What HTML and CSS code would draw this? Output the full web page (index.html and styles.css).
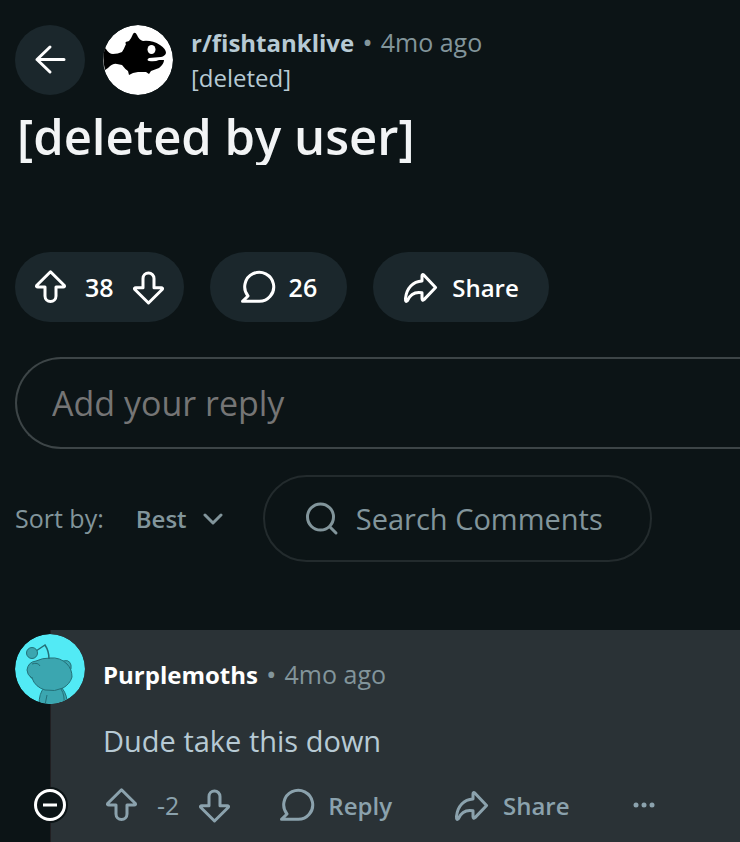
FILE: index.html
```html
<!DOCTYPE html>
<html lang="en">
<head>
<meta charset="utf-8">
<meta name="viewport" content="width=device-width, initial-scale=1">
<title>r/fishtanklive - [deleted by user]</title>
<link rel="stylesheet" href="styles.css">
</head>
<body>
<svg class="sprite" aria-hidden="true">
  <symbol id="up" viewBox="0 0 36 36"><path d="M18.500 2.800 4.600 16.500Q4 18 5.800 18H13V27a5.500 5.500 0 0 0 11 0V18h7.200q1.800 0 1.200-1.500Z"/></symbol>
  <symbol id="down" viewBox="0 0 36 36"><path d="M17.500 34 31.400 20.300Q32 18.800 30.200 18.800H23V9.500a5.500 5.500 0 0 0-11 0v9.300H4.800q-1.800 0-1.200 1.500Z"/></symbol>
  <symbol id="bubble" viewBox="0 0 36 36"><path d="M2.500 32.300 8 27A14.500 14.500 0 1 1 18.500 32.300Z"/></symbol>
  <symbol id="share" viewBox="0 0 36 36"><path d="M19 12V7q0-2.500 2-.8L32.600 18.500 21 30.600q-2 1.500-2-1V23.800C12 22.500 7 26 4.600 31.400Q2.200 34 2.500 29.500C3.500 19 10 12.500 19 12Z"/></symbol>
</svg>

<main class="page">
  <header class="post-head">
    <button class="back" type="button" aria-label="Back">
      <svg class="icon" viewBox="0 0 36 36"><path d="M32 17.500H5M18 5 5 17.500l13 12.500"/></svg>
    </button>
    <svg class="avatar" viewBox="0 0 70 70" aria-hidden="true">
      <circle cx="35" cy="35" r="35" fill="#fff"/>
      <path d="M1 22 3 24Q6 29 10 29Q15 29 19 27Q21 24 23 19Q21 17 26 16Q28 14 30 9Q32 6 34 10Q36 15 40 16Q49 15 57 20Q63 24 63 28Q62 31 58 32L46 33Q43 35 46 36Q52 37 56 35L61 35Q61 39 56 43L48 46 46 49 43 47 35 47 30 48 26 50 25 46Q22 44 19 40L14 39Q10 38 5 43L2 45Q-1 33 1 22Z"/>
      <ellipse cx="48.500" cy="24.500" rx="4" ry="4.500" fill="#fff"/>
    </svg>
    <div class="meta">
      <div class="meta-line"><a class="community" href="#">r/fishtanklive</a><span class="dot">•</span><time class="age">4mo ago</time></div>
      <div class="author">[deleted]</div>
    </div>
  </header>

  <h1 class="title">[deleted by user]</h1>

  <div class="actions">
    <div class="pill votes">
      <button class="plain" type="button" aria-label="Upvote"><svg class="icon"><use href="#up"/></svg></button>
      <span>38</span>
      <button class="plain" type="button" aria-label="Downvote"><svg class="icon"><use href="#down"/></svg></button>
    </div>
    <button class="pill comments" type="button"><svg class="icon"><use href="#bubble"/></svg><span>26</span></button>
    <button class="pill" type="button"><svg class="icon"><use href="#share"/></svg><span>Share</span></button>
  </div>

  <input class="reply-box" type="text" placeholder="Add your reply" aria-label="Add your reply">

  <div class="tools">
    <label class="sort-label" for="sort">Sort by:</label>
    <div class="sort">
      <select id="sort"><option>Best</option></select>
      <svg class="chevron" viewBox="0 0 20 12" aria-hidden="true"><path d="m2 2 8 8 8-8"/></svg>
    </div>
    <label class="search">
      <svg class="icon" viewBox="0 0 36 36" aria-hidden="true"><circle cx="17.500" cy="16" r="13"/><path d="m27 26 6 6"/></svg>
      <input type="search" placeholder="Search Comments" aria-label="Search Comments">
    </label>
  </div>

  <article class="comment">
    <div class="rail">
      <svg class="avatar" viewBox="0 0 70 70" aria-hidden="true">
        <defs><clipPath id="round"><circle cx="35" cy="35" r="35"/></clipPath></defs>
        <g clip-path="url(#round)">
          <path fill="#52eaf5" d="M0 0h70v70H0z"/>
          <g fill="#3ba6b0" stroke="#247078" stroke-width="1">
            <path d="M24 71Q24 59 29 54H47Q53 62 52 71Z"/>
            <path d="M30 71 32 61M46 55Q50 61 49 71" fill="none"/>
            <path d="M46 28Q54 24 56 31Q57 35 54 38Z"/>
            <path d="M21 27Q27 24 35 24Q45 23 52 30Q57 35 57 43Q55 50 48 54Q40 58 30 56Q20 53 17 44Q12 41 12 36Q13 28 21 27Z"/>
            <path d="M25 32Q23 28 17 30M15 42Q16 45 18 44" fill="none"/>
            <path d="M21 17 30 11Q34 17 34 25" fill="none" stroke-width="1.500"/>
            <circle cx="17" cy="19" r="5.500"/>
          </g>
        </g>
      </svg>
      <button class="collapse" type="button" aria-label="Collapse thread"><svg viewBox="0 0 36 36"><circle cx="18" cy="18" r="14.500"/><path d="M11 18h14"/></svg></button>
    </div>
    <div class="body">
      <div class="byline"><a class="user" href="#">Purplemoths</a><span class="dot">•</span><time class="age">4mo ago</time></div>
      <p class="text">Dude take this down</p>
      <div class="comment-actions">
        <div class="mini votes">
          <button class="plain" type="button" aria-label="Upvote"><svg class="icon"><use href="#up"/></svg></button>
          <span>-2</span>
          <button class="plain" type="button" aria-label="Downvote"><svg class="icon"><use href="#down"/></svg></button>
        </div>
        <button class="plain mini" type="button"><svg class="icon"><use href="#bubble"/></svg><span>Reply</span></button>
        <button class="plain mini" type="button"><svg class="icon"><use href="#share"/></svg><span>Share</span></button>
        <button class="plain more" type="button" aria-label="More"><svg viewBox="0 0 24 8"><circle cx="4" cy="4" r="2.500"/><circle cx="12" cy="4" r="2.500"/><circle cx="20" cy="4" r="2.500"/></svg></button>
      </div>
    </div>
  </article>
</main>
</body>
</html>
```

FILE: styles.css
```css
* { box-sizing: border-box; }

body {
  margin: 0;
  background: #0c1416;
  color: #fff;
  font: 24px/35px "Open Sans", "Noto Sans", sans-serif;
  overflow-x: hidden;
}

button, input, select { font: inherit; color: inherit; margin: 0; }
button { cursor: pointer; }
a { color: inherit; text-decoration: none; }

.sprite { display: block; width: 0; height: 0; }

.icon {
  display: block;
  flex: none;
  width: 36px;
  height: 36px;
  fill: none;
  stroke: currentColor;
  stroke-width: 3;
  stroke-linecap: round;
  stroke-linejoin: round;
}

.page {
  min-height: 100vh;
  display: flex;
  flex-direction: column;
  padding: 25px 0 0 15px;
}

.avatar { display: block; flex: none; width: 70px; height: 70px; border-radius: 50%; }

.post-head { display: flex; align-items: center; }

.back {
  display: grid;
  place-items: center;
  width: 70px;
  height: 70px;
  margin-right: 18px;
  padding: 0;
  border: 0;
  border-radius: 50%;
  background: #1b272c;
}

.meta { margin-left: 18px; color: #b7cad4; }
.meta-line, .byline { display: flex; align-items: center; }
.community { font-weight: 700; }
.dot { margin: 0 8px; font-size: 28px; color: #82959b; }
.age { font-size: 25px; color: #82959b; }

.title {
  height: 70px;
  margin: 0;
  padding-left: 2px;
  overflow: hidden;
  color: #f2f4f5;
  font-size: 49px;
  font-weight: 600;
  line-height: 82px;
}

.actions { display: flex; gap: 26px; margin-top: 87px; font-weight: 600; }

.pill {
  display: flex;
  align-items: center;
  gap: 13px;
  height: 70px;
  padding: 0 30px;
  border: 0;
  border-radius: 35px;
  background: #1b272c;
}

.votes { gap: 17px; font-size: 25px; }
.pill.votes { padding: 0 17px; }
.comments { font-size: 25px; }

.plain { display: flex; padding: 0; border: 0; background: none; }

.reply-box {
  height: 92px;
  margin-top: 35px;
  padding: 0 35px;
  border: 2px solid #3d4547;
  border-right: 0;
  border-radius: 46px 0 0 46px;
  background: transparent;
  font-size: 34px;
}
.reply-box::placeholder { color: #757575; opacity: 1; }

.tools { display: flex; align-items: center; margin-top: 26px; color: #82959b; }
.sort-label { font-size: 25px; }
.sort { display: flex; align-items: center; margin-left: 32px; }
.sort select {
  appearance: none;
  padding: 0;
  border: 0;
  background: transparent;
  font-weight: 600;
}
.chevron {
  width: 20px;
  height: 12px;
  margin-left: 16px;
  fill: none;
  stroke: currentColor;
  stroke-width: 3;
  stroke-linecap: round;
  stroke-linejoin: round;
  pointer-events: none;
}

.search {
  display: flex;
  align-items: center;
  gap: 17px;
  width: 389px;
  height: 87px;
  margin-left: 40px;
  padding: 0 24px 0 38px;
  border: 2px solid #232b2d;
  border-radius: 44px;
}
.search input {
  flex: 1;
  min-width: 0;
  padding: 0;
  border: 0;
  background: transparent;
  font-size: 29px;
}
.search input::placeholder { color: #82959b; opacity: 1; }

.comment {
  flex: 1;
  display: flex;
  margin-top: 68px;
  background: linear-gradient(to right, #0c1416 35px, #211f22 35px, #211f22 36px, #2a3236 36px);
}

.rail {
  display: flex;
  flex-direction: column;
  align-items: center;
  width: 70px;
  padding-top: 4px;
}
.collapse {
  width: 36px;
  height: 36px;
  margin-top: 83px;
  padding: 0;
  border: 0;
  border-radius: 50%;
  background: #0c1416;
}
.collapse svg { display: block; fill: none; stroke: #fff; stroke-width: 3; }

.body { flex: 1; padding: 27px 0 16px 18px; }
.user { font-weight: 700; }
.text { margin: 29px 0 0; color: #b7cad4; font-size: 29px; line-height: 40px; }

.comment-actions {
  display: flex;
  align-items: center;
  margin-top: 26px;
  color: #8ba2ad;
  font-weight: 600;
}
.mini { display: flex; align-items: center; }
.plain.mini { gap: 13px; margin-left: 46px; }
.plain.mini + .plain.mini { margin-left: 62px; }
.mini.votes { gap: 18px; font-weight: 400; }
.more { margin-left: 62px; }
.more svg { display: block; width: 24px; height: 8px; fill: currentColor; }
```
